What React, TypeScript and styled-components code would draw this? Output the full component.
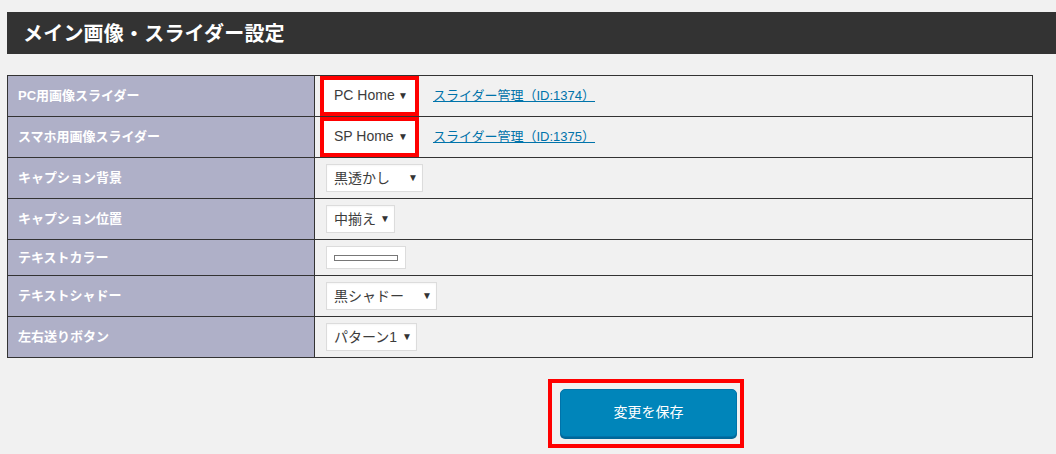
import React from "react";
import styled, { createGlobalStyle } from "styled-components";

const Global = createGlobalStyle`
  html, body { margin: 0; padding: 0; background: #f1f1f1; }
  body { font-family: "Liberation Sans", "Noto Sans CJK JP", sans-serif; color: #333; }
`;

const Page = styled.div`
  display: flex;
  flex-direction: column;
  padding: 12px 0 0 7px;
  width: 1049px;
  height: 442px;
  overflow: hidden;
`;

const Header = styled.h2`
  margin: 0;
  height: 42px;
  box-sizing: border-box;
  display: flex;
  align-items: center;
  padding: 0 0 2px 16px;
  background: #333333;
  color: #ffffff;
  font-size: 20px;
  font-weight: bold;
  letter-spacing: 0.2px;
`;

const Table = styled.table`
  margin-top: 21px;
  width: 1026px;
  border-collapse: collapse;
  table-layout: fixed;
`;

const Row = styled.tr<{ $h?: number }>`
  height: ${(p) => p.$h ?? 41}px;
`;

const Label = styled.th`
  width: 296px;
  padding: 0 0 3px 10px;
  border: 1px solid #333;
  background: #afb0c8;
  color: #ffffff;
  font-size: 13px;
  font-weight: bold;
  text-align: left;
  vertical-align: middle;
`;

const Cell = styled.td`
  padding: 0 0 0 11px;
  border: 1px solid #333;
  background: #f1f1f1;
  vertical-align: middle;
`;

const Inline = styled.div`
  display: flex;
  align-items: center;
  gap: 20px;
`;

const Select = styled.div<{ $w: number; $marked?: boolean }>`
  box-sizing: border-box;
  width: ${(p) => p.$w}px;
  height: 28px;
  display: flex;
  align-items: center;
  justify-content: space-between;
  padding: 0 4px 2px 7px;
  background: #fff;
  border: 1px solid ${(p) => (p.$marked ? "#fff" : "#dcdcdc")};
  box-shadow: ${(p) =>
    p.$marked ? "0 0 0 2px #fff, 0 0 0 6px #ff0000" : "inset 0 1px 2px rgba(0,0,0,0.04)"};
  font-size: 14px;
  color: #3c3c3c;
`;

const Arrow = styled.span`
  font-size: 10px;
  color: #333;
  line-height: 1;
  padding-top: 2px;
`;

const Link = styled.a`
  color: #0073aa;
  font-size: 13px;
  text-decoration: underline;
  margin-bottom: 4px;
  cursor: pointer;
`;

const ColorBox = styled.div`
  box-sizing: border-box;
  width: 80px;
  height: 23px;
  display: flex;
  align-items: center;
  padding-left: 7px;
  background: #fff;
  border: 1px solid #dcdcdc;
`;

const Swatch = styled.div`
  box-sizing: border-box;
  width: 64px;
  height: 6px;
  border: 1px solid #777;
  background: #fff;
`;

const Actions = styled.div`
  display: flex;
  padding: 21px 0 0 541px;
`;

const Highlight = styled.div`
  display: flex;
  border: 4px solid #ff0000;
  padding: 6px 3px 7px 8px;
`;

const SaveButton = styled.button`
  width: 177px;
  height: 48px;
  padding: 0 0 4px;
  background: #0085ba;
  border: 1px solid #0073aa;
  border-radius: 5px;
  box-shadow: 0 2px 0 #006799;
  color: #fff;
  font-family: "Liberation Sans", "Noto Sans CJK JP", sans-serif;
  font-size: 14px;
  cursor: pointer;
`;

type SelectRow = {
  label: string;
  value: string;
  width: number;
  marked?: boolean;
  link?: string;
};

const rows: SelectRow[] = [
  { label: "PC用画像スライダー", value: "PC Home", width: 87, marked: true, link: "スライダー管理（ID:1374）" },
  { label: "スマホ用画像スライダー", value: "SP Home", width: 87, marked: true, link: "スライダー管理（ID:1375）" },
  { label: "キャプション背景", value: "黒透かし", width: 97 },
  { label: "キャプション位置", value: "中揃え", width: 69 },
];

const rowsAfter: SelectRow[] = [
  { label: "テキストシャドー", value: "黒シャドー", width: 111 },
  { label: "左右送りボタン", value: "パターン1", width: 91 },
];

const renderSelectRow = (r: SelectRow) => (
  <Row key={r.label}>
    <Label>{r.label}</Label>
    <Cell>
      <Inline>
        <Select $w={r.width} $marked={r.marked}>
          <span>{r.value}</span>
          <Arrow>▼</Arrow>
        </Select>
        {r.link && <Link>{r.link}</Link>}
      </Inline>
    </Cell>
  </Row>
);

export default function App() {
  return (
    <>
      <Global />
      <Page>
        <Header>メイン画像・スライダー設定</Header>
        <Table>
          <tbody>
            {rows.map(renderSelectRow)}
            <Row $h={36}>
              <Label>テキストカラー</Label>
              <Cell>
                <ColorBox>
                  <Swatch />
                </ColorBox>
              </Cell>
            </Row>
            {rowsAfter.map(renderSelectRow)}
          </tbody>
        </Table>
        <Actions>
          <Highlight>
            <SaveButton>変更を保存</SaveButton>
          </Highlight>
        </Actions>
      </Page>
    </>
  );
}
